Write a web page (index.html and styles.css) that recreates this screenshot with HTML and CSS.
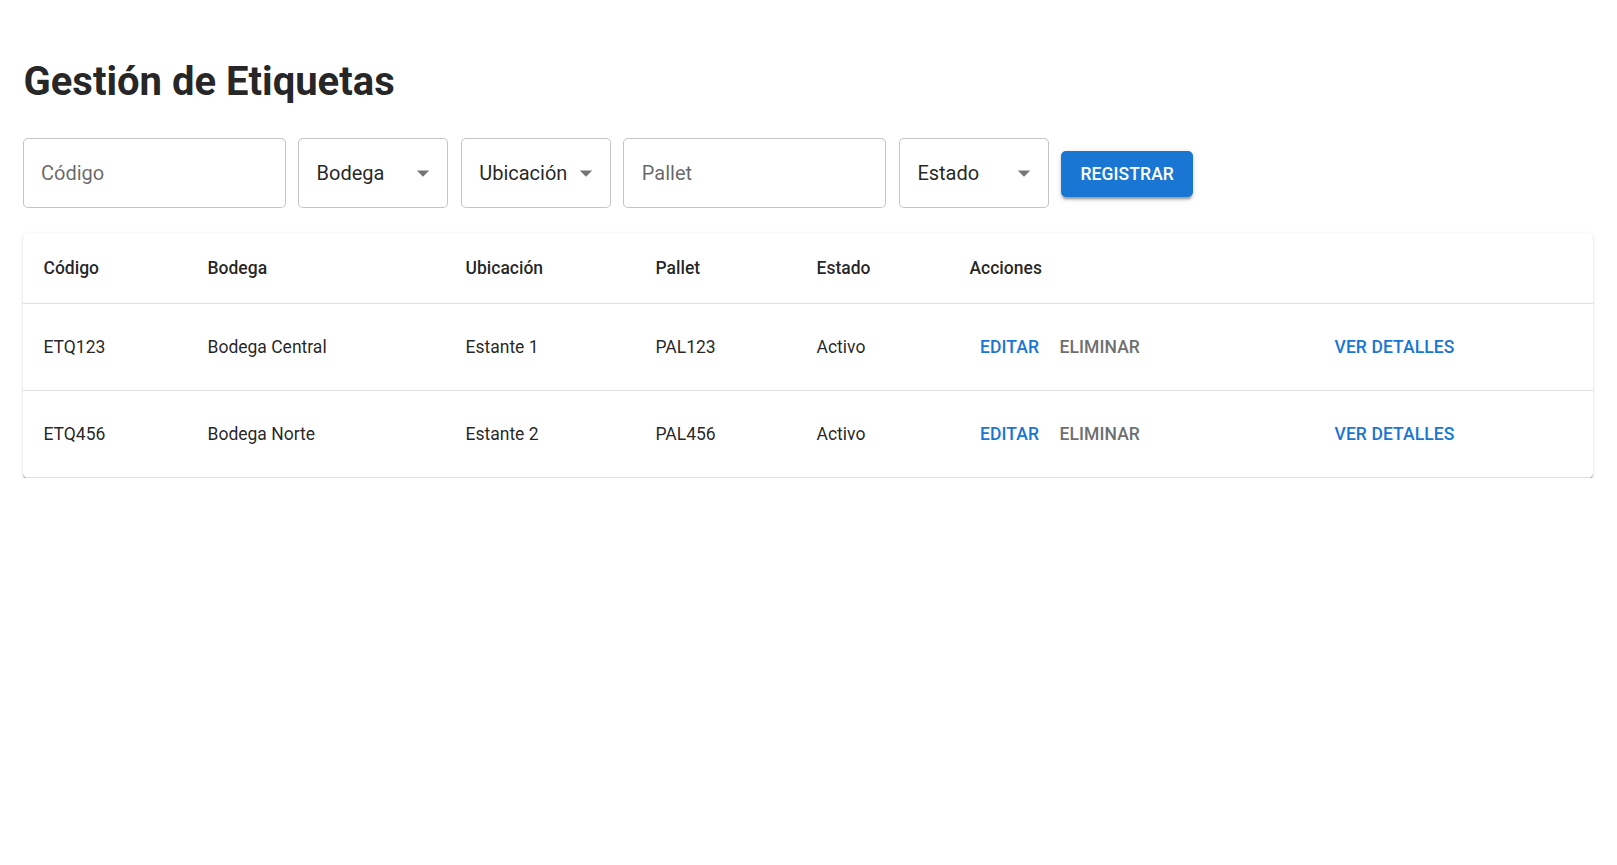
FILE: index.html
```html
<!DOCTYPE html>
<html lang="es">
<head>
<meta charset="utf-8">
<title>Gestión de Etiquetas</title>
<link rel="stylesheet" href="styles.css">
</head>
<body>
<main class="page">
  <h1 class="title">Gestión de Etiquetas</h1>

  <form class="filters">
    <input class="field field-wide" type="text" placeholder="Código">
    <div class="field field-select"><span>Bodega</span><svg class="caret" viewBox="0 0 24 24"><path d="M7 10l5 5 5-5z"/></svg></div>
    <div class="field field-select"><span>Ubicación</span><svg class="caret" viewBox="0 0 24 24"><path d="M7 10l5 5 5-5z"/></svg></div>
    <input class="field field-wide" type="text" placeholder="Pallet">
    <div class="field field-select"><span>Estado</span><svg class="caret" viewBox="0 0 24 24"><path d="M7 10l5 5 5-5z"/></svg></div>
    <button class="btn-contained" type="button">Registrar</button>
  </form>

  <div class="paper">
    <table class="table">
      <colgroup>
        <col class="c1"><col class="c2"><col class="c3"><col class="c4"><col class="c5"><col class="c6"><col class="c7">
      </colgroup>
      <thead>
        <tr>
          <th>Código</th><th>Bodega</th><th>Ubicación</th><th>Pallet</th><th>Estado</th><th>Acciones</th><th></th>
        </tr>
      </thead>
      <tbody>
        <tr>
          <td>ETQ123</td><td>Bodega Central</td><td>Estante 1</td><td>PAL123</td><td>Activo</td>
          <td><button class="btn-text primary" type="button">Editar</button><button class="btn-text muted" type="button">Eliminar</button></td>
          <td><button class="btn-text primary" type="button">Ver detalles</button></td>
        </tr>
        <tr>
          <td>ETQ456</td><td>Bodega Norte</td><td>Estante 2</td><td>PAL456</td><td>Activo</td>
          <td><button class="btn-text primary" type="button">Editar</button><button class="btn-text muted" type="button">Eliminar</button></td>
          <td><button class="btn-text primary" type="button">Ver detalles</button></td>
        </tr>
      </tbody>
    </table>
  </div>
</main>
</body>
</html>
```

FILE: styles.css
```css
* { box-sizing: border-box; }

html, body {
  margin: 0;
  padding: 0;
  background: #fff;
  font-family: Roboto, "Liberation Sans", Arial, sans-serif;
  color: rgba(0, 0, 0, 0.87);
}

.page {
  padding: 56.5px 24px 0 22.5px;
}

.title {
  margin: 0 0 32px 1px;
  font-size: 40px;
  line-height: 1.235;
  font-weight: 700;
  letter-spacing: 0;
}

.filters {
  display: flex;
  align-items: center;
  gap: 12.6px;
  margin: 0 0 25px 0;
}

.field {
  height: 70px;
  border: 1px solid rgba(0, 0, 0, 0.23);
  border-radius: 5px;
  font-family: Roboto, "Liberation Sans", Arial, sans-serif;
  font-size: 20px;
  color: rgba(0, 0, 0, 0.87);
  background: #fff;
  padding: 0 17.5px;
  flex: none;
}

.field-wide {
  width: 263px;
  outline: none;
}

.field-wide::placeholder {
  color: rgba(0, 0, 0, 0.6);
  opacity: 1;
}

.field-select {
  width: 150px;
  display: flex;
  align-items: center;
  justify-content: space-between;
  padding-right: 8.75px;
}

.caret {
  width: 30px;
  height: 30px;
  fill: rgba(0, 0, 0, 0.54);
  flex: none;
}

.btn-contained {
  height: 45.6px;
  padding: 0 19px;
  border: 0;
  border-radius: 5px;
  background: #1976d2;
  color: #fff;
  font-family: Roboto, "Liberation Sans", Arial, sans-serif;
  font-size: 17.5px;
  font-weight: 500;
  letter-spacing: 0.005em;
  text-transform: uppercase;
  box-shadow: 0 3.75px 1.25px -2.5px rgba(0, 0, 0, 0.2), 0 2.5px 2.5px 0 rgba(0, 0, 0, 0.14), 0 1.25px 6.25px 0 rgba(0, 0, 0, 0.12);
  margin-top: 2px;
}

.paper {
  background: #fff;
  border-radius: 5px;
  overflow: hidden;
  box-shadow: 0 2.5px 1.25px -1.25px rgba(0, 0, 0, 0.2), 0 1.25px 1.25px 0 rgba(0, 0, 0, 0.14), 0 1.25px 3.75px 0 rgba(0, 0, 0, 0.12);
}

.table {
  width: 100%;
  border-collapse: collapse;
  table-layout: fixed;
}

.c1 { width: 164px; }
.c2 { width: 258px; }
.c3 { width: 190px; }
.c4 { width: 161px; }
.c5 { width: 153px; }
.c6 { width: 355px; }
.c7 { width: auto; }

.table th,
.table td {
  padding: 20px 20px 20px 21px;
  text-align: left;
  font-size: 17.5px;
  line-height: 30px;
  letter-spacing: 0;
  border-bottom: 1px solid #e0e0e0;
  vertical-align: middle;
  white-space: nowrap;
}

.table th {
  font-weight: 500;
  color: rgba(0, 0, 0, 0.87);
}

.table td {
  font-weight: 400;
}

.btn-text {
  min-width: 80px;
  height: 46px;
  padding: 0 10px;
  border: 0;
  background: transparent;
  font-family: Roboto, "Liberation Sans", Arial, sans-serif;
  font-size: 17.5px;
  font-weight: 500;
  letter-spacing: 0.005em;
  text-transform: uppercase;
  border-radius: 5px;
  vertical-align: middle;
}

.primary { color: #1976d2; }
.muted { color: #6f6f6f; }
```
